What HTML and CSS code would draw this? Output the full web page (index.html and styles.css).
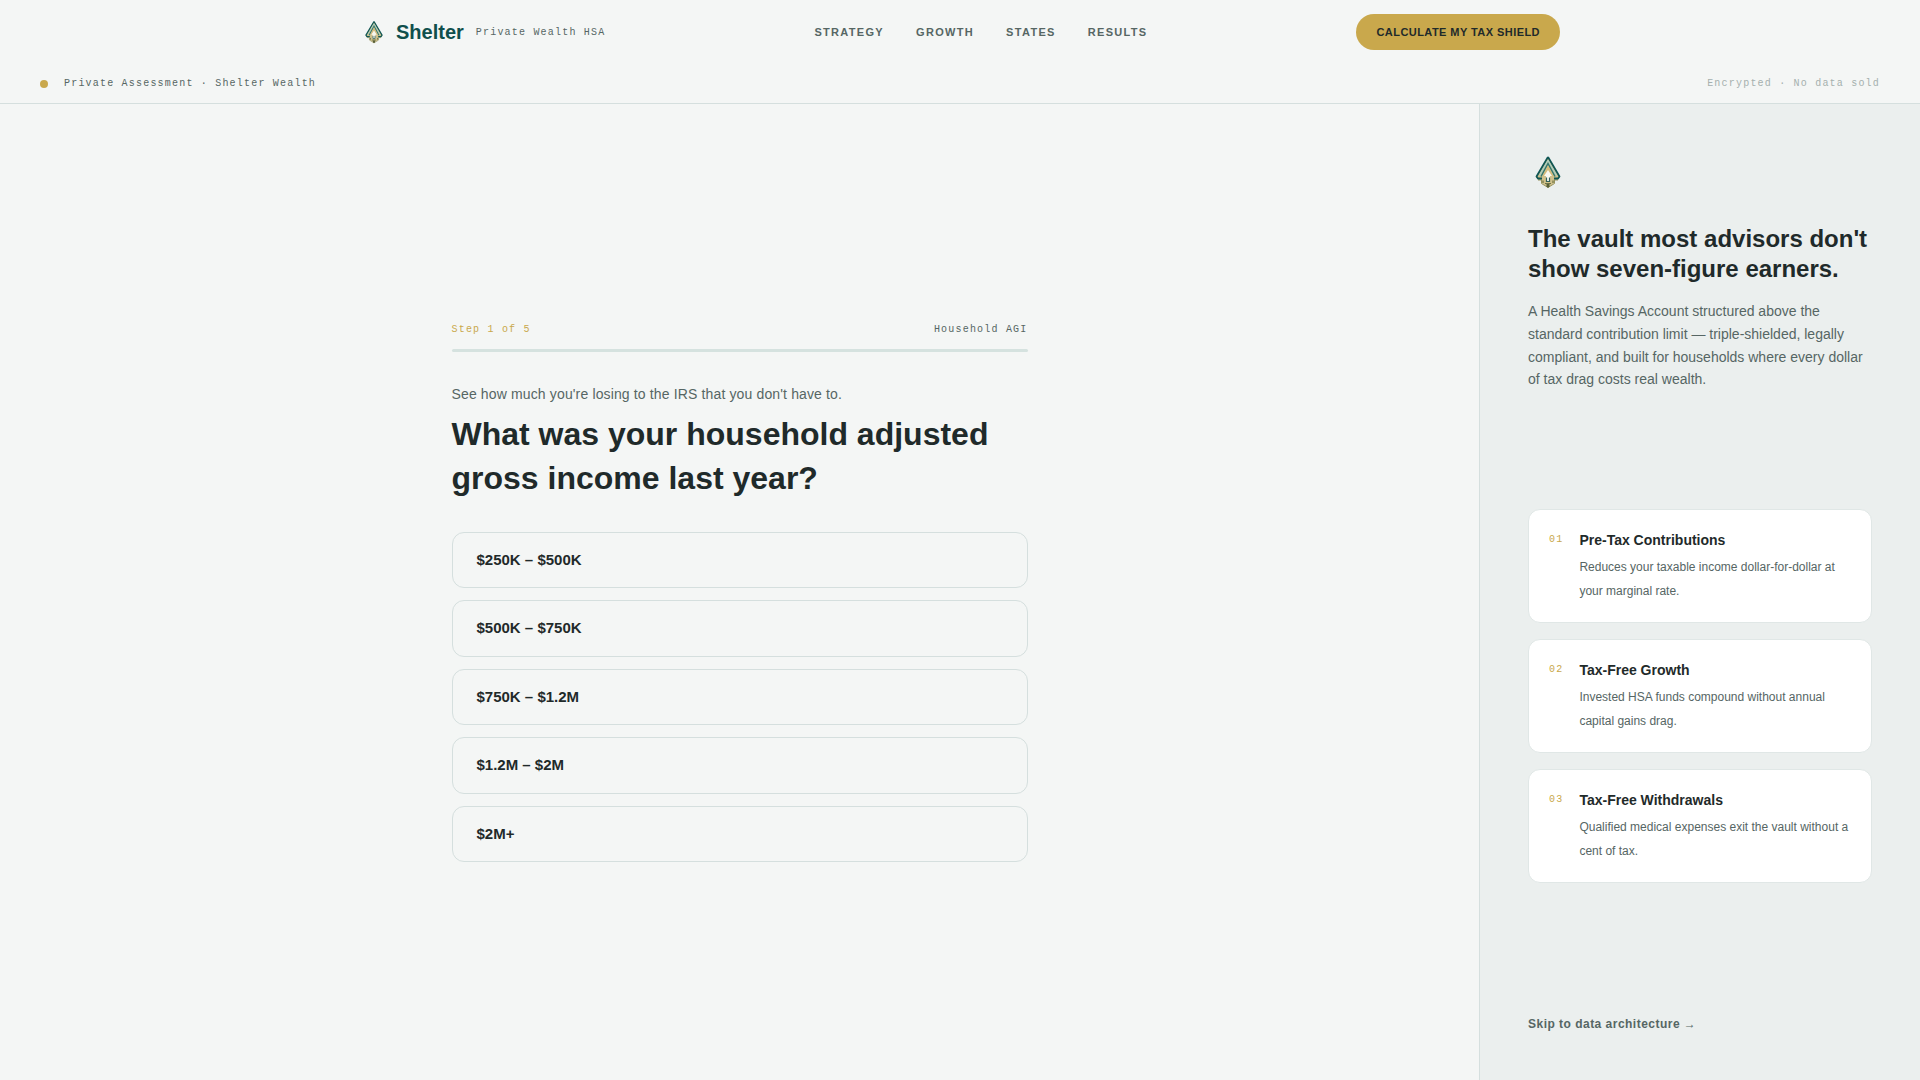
FILE: index.html
```
<!doctype html>
<html lang="en">
<head>
    <meta charset="UTF-8">
    <meta name="viewport" content="width=device-width, initial-scale=1.0">
    <title>Shelter | Private Wealth HSA</title>
    <link rel="stylesheet" href="styles.css">
</head>
<body>
<!-- logo, shared by the header and the side panel -->
<svg class="sprite" width="0" height="0" aria-hidden="true">
    <symbol id="logo" viewBox="0 0 40 40">
        <path d="M20 5 L32 25 L30 28 H26.500 V31 L20 35.500 L13.500 31 V28 H10 L8 25 Z" fill="#cfc08a"/>
        <path d="M30 28 H26.500 V31.500 L20 35.500 L13.500 31.500 V28 H10" fill="none" stroke="#97925c" stroke-width="1"/>
        <path d="M20 5 L31.500 24.500 L30 26.500 H26 M20 5 L8.500 24.500 L10 26.500 H14" fill="none" stroke="#0f5654" stroke-width="1.800" stroke-linejoin="round"/>
        <path d="M20 8.500 L28.500 23.500 M20 8.500 L11.500 23.500" fill="none" stroke="#a6cfc9" stroke-width="1.200"/>
        <path d="M13 24.500 L20 11.500 L27 24.500" fill="none" stroke="#2f7873" stroke-width="1.500"/>
        <path d="M20 13.500 L25.500 24 H14.500 Z" fill="#d3bb7c"/>
        <path d="M20 18 L24 24 H22 V30 H18 V24 H16 Z" fill="#f8f8ef"/>
        <path d="M18.500 25.500 V29.500 H21.500 V25.500" fill="none" stroke="#31615a" stroke-width="1.200"/>
        <path d="M15 28.500 V31 M25 28.500 V31 M17 31.500 H23" fill="none" stroke="#6d7447" stroke-width="1.200"/>
        <path d="M18.500 32 H21.500 V34.500 L20 36 L18.500 34.500 Z" fill="#586039"/>
    </symbol>
</svg>

<header class="site-header">
    <div class="header-inner">
        <a class="brand" href="#">
            <svg class="brand-logo" aria-hidden="true"><use href="#logo"/></svg>
            <span class="brand-name">Shelter</span>
            <span class="mono">Private Wealth HSA</span>
        </a>
        <nav class="site-nav">
            <a href="#">Strategy</a>
            <a href="#">Growth</a>
            <a href="#">States</a>
            <a href="#">Results</a>
        </nav>
        <button class="btn-cta" type="button">Calculate my tax shield</button>
    </div>
</header>

<div class="status-bar">
    <div class="status-left">
        <span class="dot"></span>
        <span class="mono">Private Assessment · Shelter Wealth</span>
    </div>
    <span class="mono mono-faint">Encrypted · No data sold</span>
</div>

<div class="layout">
    <main class="quiz-wrap">
        <section class="quiz">
            <div class="quiz-step">
                <span class="mono mono-gold">Step 1 of 5</span>
                <span class="mono">Household AGI</span>
            </div>
            <div class="progress"></div>
            <p class="quiz-intro">See how much you're losing to the IRS that you don't have to.</p>
            <h1 class="quiz-title">What was your household adjusted gross income last year?</h1>
            <div class="options">
                <button class="option" type="button">$250K – $500K</button>
                <button class="option" type="button">$500K – $750K</button>
                <button class="option" type="button">$750K – $1.2M</button>
                <button class="option" type="button">$1.2M – $2M</button>
                <button class="option" type="button">$2M+</button>
            </div>
        </section>
    </main>

    <aside class="panel">
        <div class="panel-top">
            <svg class="panel-logo" aria-hidden="true"><use href="#logo"/></svg>
            <h2 class="panel-title">The vault most advisors don't show seven-figure earners.</h2>
            <p class="panel-text">A Health Savings Account structured above the standard contribution limit — triple-shielded, legally compliant, and built for households where every dollar of tax drag costs real wealth.</p>
        </div>
        <div class="cards">
            <div class="card">
                <span class="mono mono-gold card-num">01</span>
                <div>
                    <h3 class="card-title">Pre-Tax Contributions</h3>
                    <p class="card-text">Reduces your taxable income dollar-for-dollar at your marginal rate.</p>
                </div>
            </div>
            <div class="card">
                <span class="mono mono-gold card-num">02</span>
                <div>
                    <h3 class="card-title">Tax-Free Growth</h3>
                    <p class="card-text">Invested HSA funds compound without annual capital gains drag.</p>
                </div>
            </div>
            <div class="card">
                <span class="mono mono-gold card-num">03</span>
                <div>
                    <h3 class="card-title">Tax-Free Withdrawals</h3>
                    <p class="card-text">Qualified medical expenses exit the vault without a cent of tax.</p>
                </div>
            </div>
        </div>
        <a class="skip" href="#">Skip to data architecture →</a>
    </aside>
</div>
</body>
</html>
```

FILE: styles.css
```
* {
    box-sizing: border-box;
}

body {
    margin: 0;
    min-height: 100vh;
    display: flex;
    flex-direction: column;
    background-color: #f4f6f5;
    color: #1f2a2a;
    font-family: "Liberation Sans", Arial, sans-serif;
}

h1, h2, h3, p {
    margin: 0;
}

a {
    color: inherit;
    text-decoration: none;
}

button {
    font-family: inherit;
    cursor: pointer;
}

.sprite {
    position: absolute;
}

.mono {
    font-family: "Liberation Mono", "Courier New", monospace;
    font-size: 10px;
    line-height: 15px;
    letter-spacing: 0.12em;
    color: #566664;
}

.mono-gold {
    color: #c9a84c;
}

.mono-faint {
    color: #a5b0ae;
}

/* header */
.header-inner {
    max-width: 1200px;
    height: 64px;
    margin: 0 auto;
    display: flex;
    align-items: center;
    justify-content: space-between;
}

.brand {
    display: flex;
    align-items: center;
}

.brand-logo {
    width: 28px;
    height: 28px;
    margin-right: 8px;
}

.brand-name {
    margin-right: 12px;
    font-size: 20px;
    font-weight: bold;
    color: #0f4f4c;
}

.site-nav {
    display: flex;
    gap: 32px;
    font-size: 11px;
    font-weight: bold;
    letter-spacing: 0.12em;
    text-transform: uppercase;
    color: #566664;
}

.btn-cta {
    height: 36px;
    padding: 0 20px;
    border: none;
    border-radius: 18px;
    background-color: #c9a84c;
    color: #1f2a2a;
    font-size: 11px;
    font-weight: bold;
    letter-spacing: 0.04em;
    text-transform: uppercase;
}

/* status bar */
.status-bar {
    height: 40px;
    padding: 0 40px;
    display: flex;
    align-items: center;
    justify-content: space-between;
    border-bottom: 1px solid #d5dfde;
}

.status-left {
    display: flex;
    align-items: center;
    gap: 16px;
}

.dot {
    width: 8px;
    height: 8px;
    border-radius: 50%;
    background-color: #c9a84c;
}

/* two columns */
.layout {
    flex: 1;
    display: grid;
    grid-template-columns: 1fr 441px;
}

.quiz-wrap {
    display: flex;
    align-items: center;
    justify-content: center;
}

.quiz {
    width: 100%;
    max-width: 576px;
}

.quiz-step {
    display: flex;
    justify-content: space-between;
}

.progress {
    height: 3px;
    margin: 12px 0 32px;
    border-radius: 2px;
    background-color: #d5e2df;
}

.quiz-intro {
    margin-bottom: 8px;
    font-size: 14px;
    line-height: 20px;
    letter-spacing: 0.01em;
    color: #566664;
}

.quiz-title {
    margin-bottom: 32px;
    font-size: 32px;
    line-height: 44px;
}

.options {
    display: flex;
    flex-direction: column;
    gap: 12px;
}

.option {
    padding: 16px 24px;
    border: 1px solid #d5dfde;
    border-radius: 12px;
    background-color: transparent;
    color: #1f2a2a;
    font-size: 15px;
    font-weight: bold;
    line-height: 1.5;
    text-align: left;
}

/* side panel */
.panel {
    padding: 48px;
    display: flex;
    flex-direction: column;
    justify-content: space-between;
    border-left: 1px solid #d5dfde;
    background-color: #ebefee;
}

.panel-logo {
    display: block;
    width: 40px;
    height: 40px;
    margin-bottom: 32px;
}

.panel-title {
    margin-bottom: 16px;
    font-size: 24px;
    line-height: 30px;
}

.panel-text {
    font-size: 14px;
    line-height: 1.625;
    color: #566664;
}

.cards {
    display: flex;
    flex-direction: column;
    gap: 16px;
}

.card {
    padding: 20px 20px 19px;
    display: flex;
    gap: 16px;
    border: 1px solid #e0e7e6;
    border-radius: 12px;
    background-color: #fff;
}

.card-num {
    line-height: 20px;
}

.card-title {
    margin-bottom: 5px;
    font-size: 14px;
    line-height: 20px;
}

.card-text {
    font-size: 12px;
    line-height: 24px;
    color: #566664;
}

.skip {
    padding-top: 16px;
    font-size: 12px;
    font-weight: bold;
    line-height: 15px;
    letter-spacing: 0.04em;
    color: #566664;
}
```
